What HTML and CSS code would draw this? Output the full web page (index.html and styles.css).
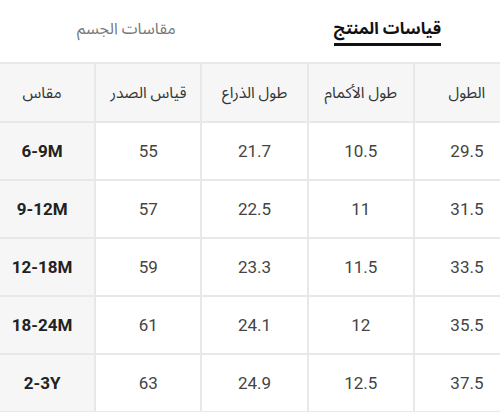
FILE: index.html
```html
<!DOCTYPE html>
<html lang="ar" dir="rtl">
<head>
<meta charset="utf-8">
<link rel="stylesheet" href="styles.css">
</head>
<body>
<div class="tabs">
  <div class="tab active">قياسات المنتج</div>
  <div class="tab">مقاسات الجسم</div>
</div>
<table class="sizes">
  <thead>
    <tr><th>الطول</th><th>طول الأكمام</th><th>طول الذراع</th><th>قياس الصدر</th><th class="size">مقاس</th></tr>
  </thead>
  <tbody>
    <tr><td>29.5</td><td>10.5</td><td>21.7</td><td>55</td><td class="size">6-9M</td></tr>
    <tr><td>31.5</td><td>11</td><td>22.5</td><td>57</td><td class="size">9-12M</td></tr>
    <tr><td>33.5</td><td>11.5</td><td>23.3</td><td>59</td><td class="size">12-18M</td></tr>
    <tr><td>35.5</td><td>12</td><td>24.1</td><td>61</td><td class="size">18-24M</td></tr>
    <tr><td>37.5</td><td>12.5</td><td>24.9</td><td>63</td><td class="size">2-3Y</td></tr>
  </tbody>
</table>
</body>
</html>
```
FILE: styles.css
```css
html, body {
  margin: 0;
  padding: 0;
  background: #ffffff;
  overflow: hidden;
}
body {
  width: 500px;
  height: 412px;
  font-family: Roboto, "Noto Sans Arabic", "DejaVu Sans", sans-serif;
  color: #333;
}
.tabs {
  display: flex;
  align-items: flex-start;
  gap: 158px;
  height: 62px;
  box-sizing: border-box;
  padding: 15px 59px 0 0;
}
.tab {
  font-size: 16px;
  line-height: 28px;
  color: #777;
}
.tab.active {
  color: #111;
  font-weight: bold;
  font-size: 16.5px;
  border-bottom: 3px solid #111;
}
.sizes {
  direction: rtl;
  border-collapse: collapse;
  table-layout: fixed;
  width: 533px;
  margin-right: -21px;
}
.sizes th, .sizes td {
  border: 2px solid #e8e8e8;
  text-align: center;
  padding: 0;
}
.sizes th {
  height: 57px;
  background: #f6f6f6;
  font-weight: normal;
  font-size: 15.5px;
  color: #333;
}
.sizes td {
  height: 56px;
  font-size: 17px;
  color: #444;
}
.sizes td.size {
  background: #f6f6f6;
  font-weight: bold;
  color: #222;
}
```
